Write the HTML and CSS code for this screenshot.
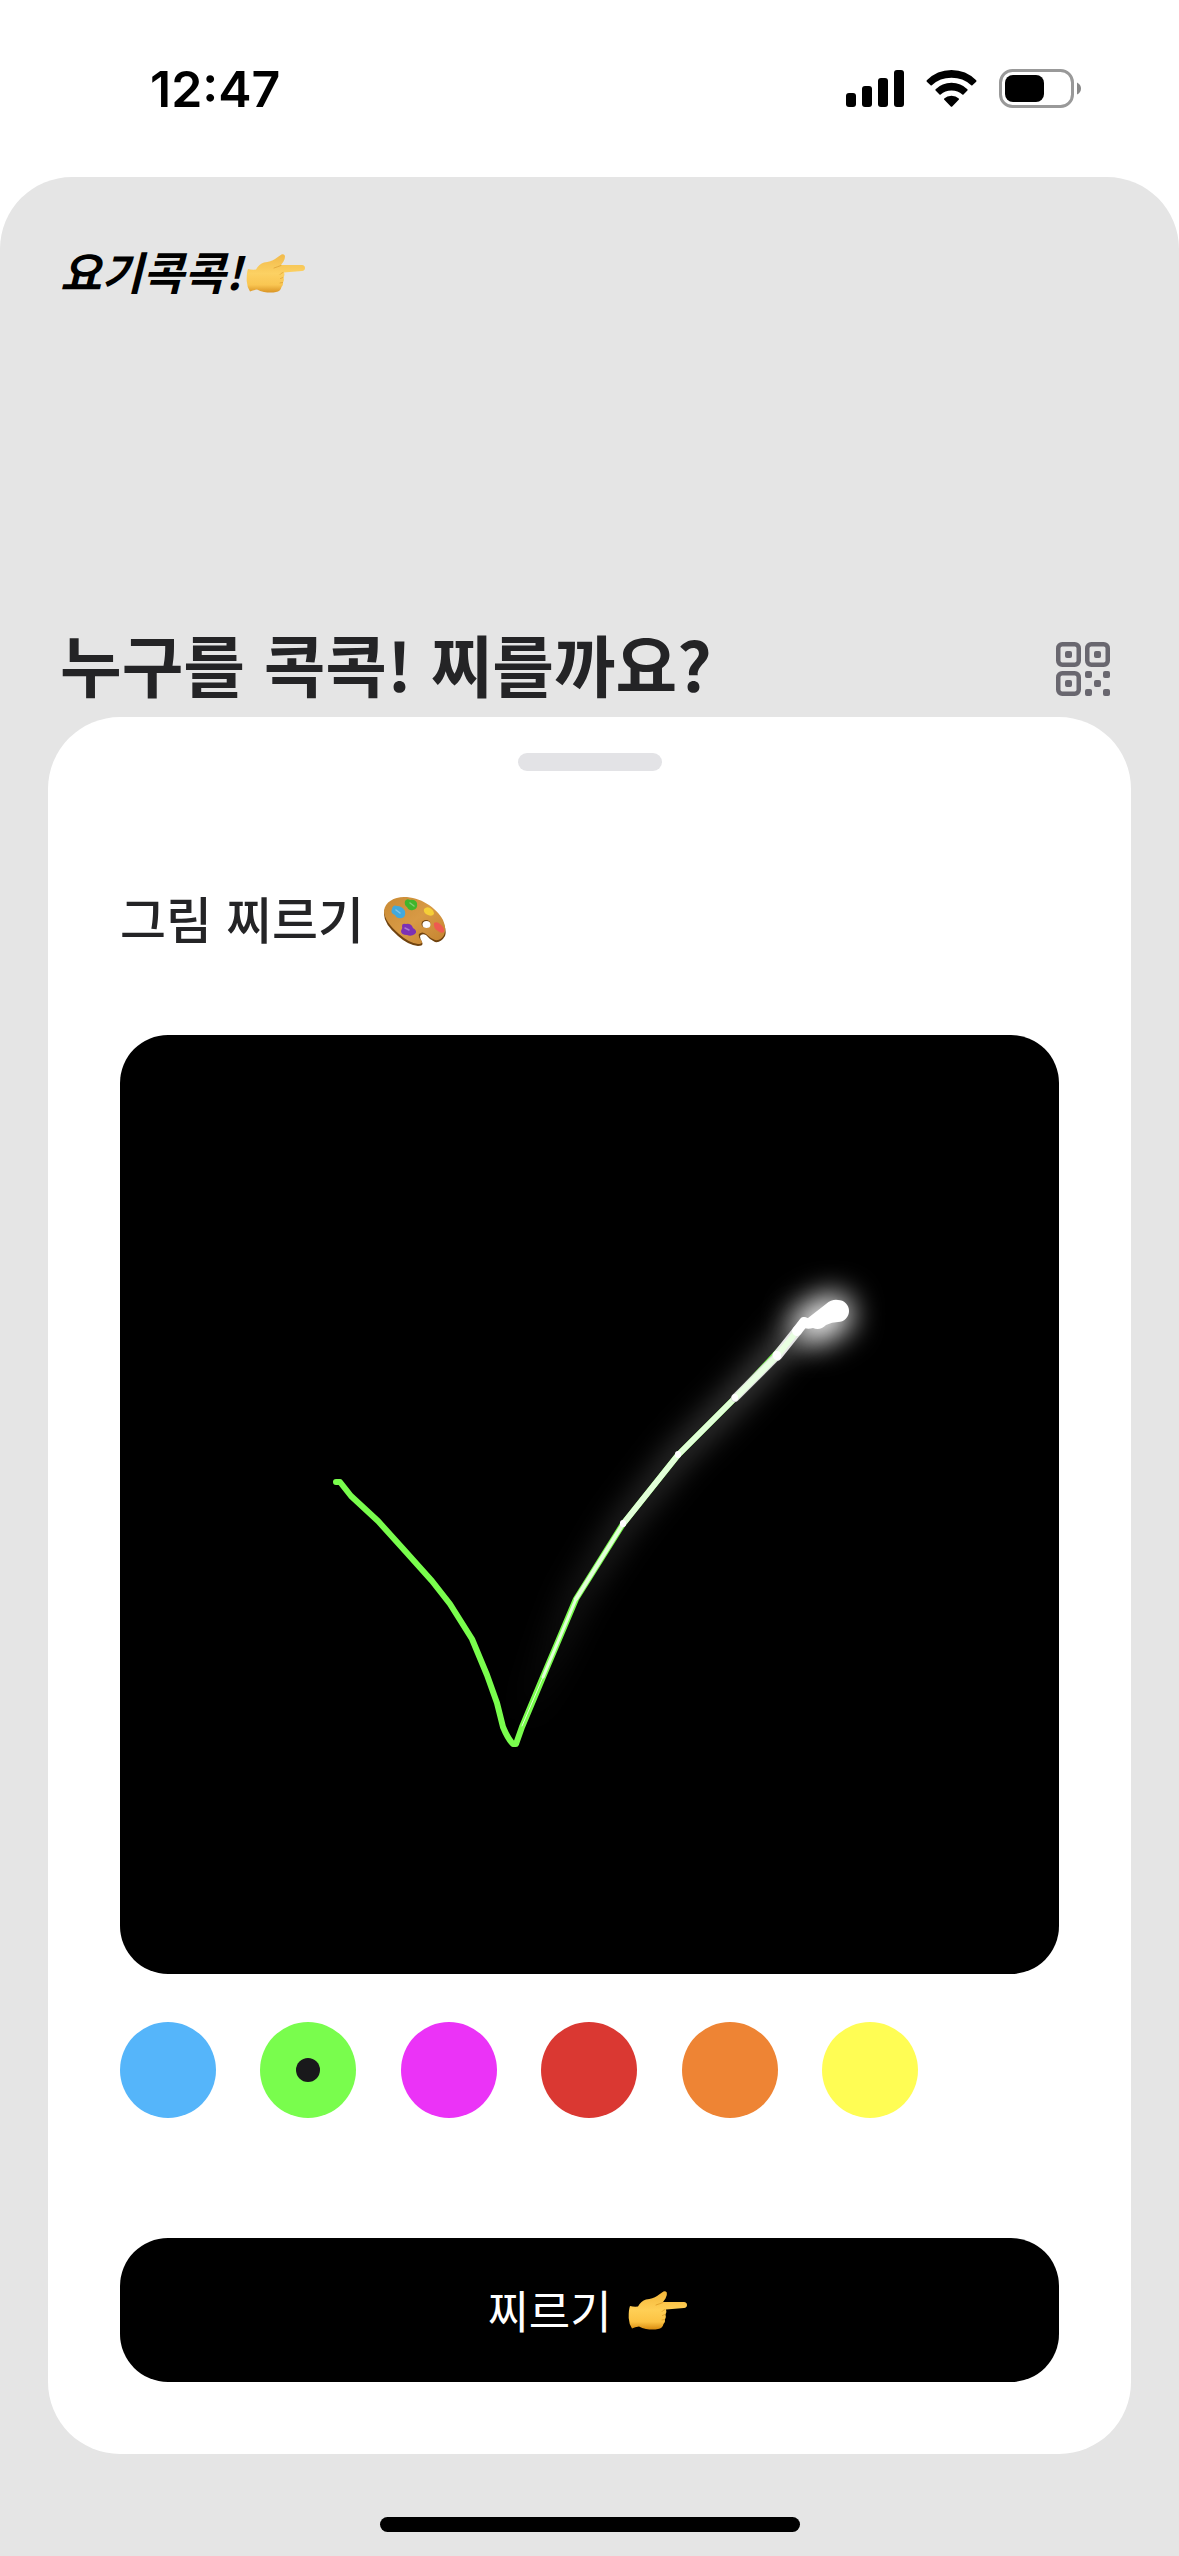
FILE: index.html
```html
<!DOCTYPE html>
<html lang="ko">
<head>
<meta charset="utf-8">
<meta name="viewport" content="width=device-width, initial-scale=1">
<title>요기콕콕!</title>
<link rel="stylesheet" href="styles.css">
</head>
<body>
<svg class="defs" aria-hidden="true">
  <defs>
    <linearGradient id="skin" x1="0" y1="0" x2="0" y2="1">
      <stop offset="0" stop-color="#f3b63a"/>
      <stop offset=".5" stop-color="#ffcf55"/>
      <stop offset=".8" stop-color="#fcc343"/>
      <stop offset="1" stop-color="#d98c10"/>
    </linearGradient>
    <linearGradient id="wood" x1="0" y1="0" x2="1" y2="1">
      <stop offset="0" stop-color="#c98a34"/>
      <stop offset=".5" stop-color="#d89a45"/>
      <stop offset="1" stop-color="#c4832f"/>
    </linearGradient>
    <symbol id="hand" viewBox="0 0 60 40">
      <path fill="url(#skin)" d="M2 16Q6 17 10 16.500Q13 11 18 9.500Q25 8.500 29 6L34 2.500Q37 0 38.800 2.500Q39.500 5 37.500 8.500L35 12L56 12Q59 12.300 59 15Q59 17.700 56 18L38 19.500Q39 22 37.500 24.500Q38.500 27 37 29.500Q37.500 32 35.500 34Q34.500 38.500 30 39Q25 40 18 39Q14 38 11 36.500Q7 37 4 38.500Q1 34 .7 28Q.5 20 2 16Z"/>
      <path fill="none" stroke="#d9961f" stroke-width="1" stroke-linecap="round" opacity=".7" d="M35 12.500Q31 14 28 15M37 19.500Q35 20 34 21.500M37 24.500L34.500 25.500M36.500 29.500L34 30"/>
    </symbol>
  </defs>
</svg>

<header class="status">
  <time class="clock">12:47</time>
  <div class="indicators">
    <svg width="58" height="40" viewBox="0 0 58 40" role="img" aria-label="신호">
      <rect x="0" y="24" width="10" height="14" rx="3"/>
      <rect x="16" y="17" width="10" height="21" rx="3"/>
      <rect x="32" y="9" width="10" height="29" rx="3"/>
      <rect x="48" y="1" width="10" height="37" rx="3"/>
    </svg>
    <svg width="51" height="40" viewBox="0 0 51 40" role="img" aria-label="Wi-Fi">
      <path d="M.8 11.300Q.2 12 .8 12.700L4.600 16.300Q5.200 16.800 5.800 16.200Q14 8.800 25.500 8.800T45.200 16.200Q45.800 16.800 46.400 16.300L50.200 12.700Q50.800 12 50.200 11.300Q40 1 25.500 1T.8 11.300Z"/>
      <path d="M9.600 20.300Q9 21 9.600 21.600L13.500 25.400Q14.100 25.900 14.700 25.400Q19 21.500 25.500 21.500T36.300 25.400Q36.900 25.900 37.500 25.400L41.400 21.600Q42 21 41.400 20.300Q35 13.800 25.500 13.800T9.600 20.300Z"/>
      <path d="M18.200 29.500Q17.700 30.200 18.300 30.800L24.800 37.400Q25.500 38 26.200 37.400L32.700 30.800Q33.300 30.200 32.800 29.500Q30 26.700 25.500 26.700T18.200 29.500Z"/>
    </svg>
    <svg width="83" height="40" viewBox="0 0 83 40" role="img" aria-label="배터리">
      <rect x="1.500" y="1.500" width="72" height="36" rx="12" fill="none" stroke="#999" stroke-width="3"/>
      <rect x="6" y="6" width="39" height="27" rx="8"/>
      <path fill="#888" d="M78 13.500Q82 15.500 82 19.500T78 25.500Z"/>
    </svg>
  </div>
</header>

<main class="app">
  <div class="brand">
    <span class="logo">요기콕콕!</span>
    <svg class="emoji" width="60" height="40" role="img" aria-label="👉"><use href="#hand"/></svg>
  </div>

  <div class="heading">
    <h1>누구를 콕콕! 찌를까요?</h1>
    <button class="qr" type="button" aria-label="QR 코드">
      <svg width="54" height="54" viewBox="0 0 54 54">
        <g fill="none" stroke="#69676f" stroke-width="4.500">
          <rect x="2.250" y="2.250" width="20.500" height="20.500" rx="4"/>
          <rect x="31.250" y="2.250" width="20.500" height="20.500" rx="4"/>
          <rect x="2.250" y="31.250" width="20.500" height="20.500" rx="4"/>
        </g>
        <g fill="#69676f">
          <rect x="9" y="9" width="7" height="7" rx="2"/>
          <rect x="38" y="9" width="7" height="7" rx="2"/>
          <rect x="9" y="38" width="7" height="7" rx="2"/>
          <rect x="29" y="29" width="7" height="7" rx="2"/>
          <rect x="47" y="29" width="7" height="7" rx="2"/>
          <rect x="38" y="38" width="7" height="7" rx="2"/>
          <rect x="29" y="47" width="7" height="7" rx="2"/>
          <rect x="47" y="47" width="7" height="7" rx="2"/>
        </g>
      </svg>
    </button>
  </div>

  <section class="sheet">
    <div class="handle"></div>
    <div class="title">
      <h2>그림 찌르기</h2>
      <svg width="62" height="50" viewBox="0 0 62 50" role="img" aria-label="🎨">
        <path fill="#70430f" d="M0 17C0 7 9 2 20 2C36 2 52 12 59 25Q63 34 61 39Q57 46 51 45Q46 43 42 38Q38 36 36 39Q36 42 38 45Q40 49 34 49Q24 48 14 39Q0 27 0 17Z"/>
        <path fill="url(#wood)" d="M0 14C1 5 10 0 20 0C36 0 52 10 59 23Q63 32 60 38Q57 44 51 43Q46 41 42 37Q38 34 35 37Q34 40 37 43Q40 47 34 47Q25 46 15 37Q0 24 0 14Z"/>
        <ellipse cx="42" cy="27" rx="4.500" ry="4" fill="#70430f"/>
        <ellipse cx="42.500" cy="27.500" rx="4" ry="3.500" fill="#fff"/>
        <path fill="#41b52c" d="M21 4Q23 1 26 3Q31 2 33 6Q34 12 29 13Q25 14 23 10Q20 8 21 4Z"/>
        <path fill="#42a9dc" d="M8 12Q9 7 13 9Q18 9 21 14Q22 20 18 21Q13 22 11 18Q6 16 8 12Z"/>
        <path fill="#f6cf37" d="M40 12Q43 9 46 11Q50 13 50 17Q48 20 44 18Q39 16 40 12Z"/>
        <path fill="#ee5b50" d="M50 26Q53 24 56 27Q61 31 60 35Q57 37 54 34Q49 31 50 26Z"/>
        <path fill="#7c31b4" d="M18 29Q18 26 22 27Q27 26 29 31Q34 34 31 37Q27 40 23 38Q17 38 17 34Q19 31 18 29Z"/>
        <path fill="none" stroke="#fff" stroke-width="1.500" stroke-linecap="round" opacity=".35" d="M12 13L16 16M26 6L30 9M21 31L25 33"/>
      </svg>
    </div>

    <svg class="canvas" viewBox="0 0 939 939" role="img" aria-label="그림판">
      <defs>
        <filter id="halo" filterUnits="userSpaceOnUse" x="0" y="0" width="939" height="939"><feGaussianBlur stdDeviation="15"/></filter>
        <linearGradient id="fade" gradientUnits="userSpaceOnUse" x1="402" y1="692" x2="684" y2="287">
          <stop offset="0" stop-color="#fff" stop-opacity="0"/>
          <stop offset="1" stop-color="#fff" stop-opacity=".4"/>
        </linearGradient>
      </defs>
      <g fill="none" stroke-linecap="round" stroke-linejoin="round">
        <path stroke="url(#fade)" stroke-width="18" filter="url(#halo)" d="M402 692L456 564L503 489L558 420L615 363L684 287"/>
        <path stroke="#fff" stroke-width="40" filter="url(#halo)" d="M694 289L712 279"/>
        <path stroke="#79fd4d" stroke-width="6" d="M216 447L220 447L231 461L258 486L286 517L312 546L330 569L352 604L367 640L377 668L383 692Q388 704 393 709L396 709L402 692L423 642L456 564L503 489L558 420L615 363L677 296"/>
        <path stroke="#e2ffd9" stroke-width="1" d="M402 691L423 642"/>
        <path stroke="#e2ffd9" stroke-width="3" d="M423 642L456 564"/>
        <path stroke="#e2ffd9" stroke-width="4" d="M456 564L503 489"/>
        <path stroke="#e2ffd9" stroke-width="6" d="M503 489L558 420L615 363"/>
        <path stroke="#dcdcdc" stroke-width="8" d="M615 363L657 321"/>
        <path stroke="#e8e8e8" stroke-width="10" d="M657 321L677 296"/>
        <path stroke="#e9ffe2" stroke-width="6" d="M615 363L657 321L677 296"/>
        <path stroke="#fff" stroke-width="6" d="M503 488V489M558 419V420M615 362V363"/>
        <path stroke="#fff" stroke-width="8" d="M657 320V321"/>
        <path stroke="#fff" stroke-width="10" d="M677 296L684 287"/>
      </g>
      <path fill="#fff" d="M679 287Q680 281 688 283L706 269Q712 264 718 265A11 11 0 0 1 718 287Q712 287 706 290Q700 296 693 293Q687 295 682 292Z"/>
    </svg>

    <div class="colors" role="radiogroup" aria-label="색상">
      <input class="swatch blue" type="radio" name="color" aria-label="파랑">
      <input class="swatch green" type="radio" name="color" aria-label="초록" checked>
      <input class="swatch pink" type="radio" name="color" aria-label="분홍">
      <input class="swatch red" type="radio" name="color" aria-label="빨강">
      <input class="swatch orange" type="radio" name="color" aria-label="주황">
      <input class="swatch yellow" type="radio" name="color" aria-label="노랑">
    </div>

    <button class="send" type="button">
      찌르기
      <svg class="emoji" width="60" height="40" role="img" aria-label="👉"><use href="#hand"/></svg>
    </button>
  </section>

  <div class="home"></div>
</main>
</body>
</html>
```
FILE: styles.css
```css
* {
  box-sizing: border-box;
}

body {
  margin: 0;
  min-height: 100vh;
  display: flex;
  flex-direction: column;
  background: #fff;
  color: #242426;
  font-family: "Noto Sans CJK KR", sans-serif;
}

.defs {
  position: absolute;
  width: 0;
  height: 0;
}

svg {
  flex: none;
}

.status {
  display: flex;
  justify-content: space-between;
  align-items: center;
  height: 177px;
  padding: 0 97px 0 150px;
}

.clock {
  color: #000;
  font: 600 50px/60px Inter, sans-serif;
}

.indicators {
  display: flex;
  gap: 22px;
}

.app {
  flex: 1;
  display: flex;
  flex-direction: column;
  padding: 60px 48px 24px;
  border-radius: 72px 72px 0 0;
  background: #e5e5e5;
}

.brand {
  display: flex;
  align-items: center;
  gap: 4px;
  height: 72px;
  margin-bottom: 316px;
  padding: 0 12px;
}

.logo {
  align-self: flex-start;
  color: #000;
  font-size: 45px;
  font-style: italic;
  font-weight: 700;
  line-height: 68px;
}

.brand .emoji {
  opacity: .9;
}

.heading {
  display: flex;
  justify-content: space-between;
  align-items: center;
  min-height: 88px;
  margin-bottom: 4px;
  padding: 0 21px 0 12px;
}

h1 {
  align-self: flex-start;
  margin: 0;
  font-size: 67px;
  font-weight: 700;
  line-height: 76px;
}

.qr {
  display: flex;
  padding: 0;
  border: 0;
  background: none;
}

.sheet {
  display: flex;
  flex-direction: column;
  padding: 36px 72px 72px;
  border-radius: 72px;
  background: #fff;
}

.handle {
  align-self: center;
  width: 144px;
  height: 18px;
  border-radius: 9px;
  background: #e3e3e6;
}

.title {
  display: flex;
  align-items: center;
  gap: 20px;
  min-height: 78px;
  margin: 112px 0 74px;
}

h2 {
  align-self: flex-start;
  margin: 0;
  font-size: 50px;
  font-weight: 500;
  line-height: 68px;
}

.canvas {
  width: 100%;
  aspect-ratio: 1;
  border-radius: 48px;
  background: #000;
}

.colors {
  display: flex;
  justify-content: space-between;
  width: 85%;
  margin: 48px 0 120px;
}

.swatch {
  appearance: none;
  display: grid;
  place-items: center;
  width: 96px;
  height: 96px;
  margin: 0;
  border-radius: 50%;
}

.swatch:checked::before {
  content: "";
  width: 24px;
  height: 24px;
  border-radius: 50%;
  background: #19191b;
}

.blue { background: #55b5fa; }
.green { background: #79fd4d; }
.pink { background: #eb33f7; }
.red { background: #da3832; }
.orange { background: #ee8434; }
.yellow { background: #fffd54; }

.send {
  display: flex;
  justify-content: center;
  align-items: center;
  gap: 16px;
  height: 144px;
  padding: 0 4px 0 0;
  border: 0;
  border-radius: 48px;
  background: #000;
  color: #fff;
  font: 400 45px/72px "Noto Sans CJK KR", sans-serif;
}

.home {
  align-self: center;
  width: 420px;
  height: 15px;
  margin-top: auto;
  border-radius: 8px;
  background: #000;
}
```
